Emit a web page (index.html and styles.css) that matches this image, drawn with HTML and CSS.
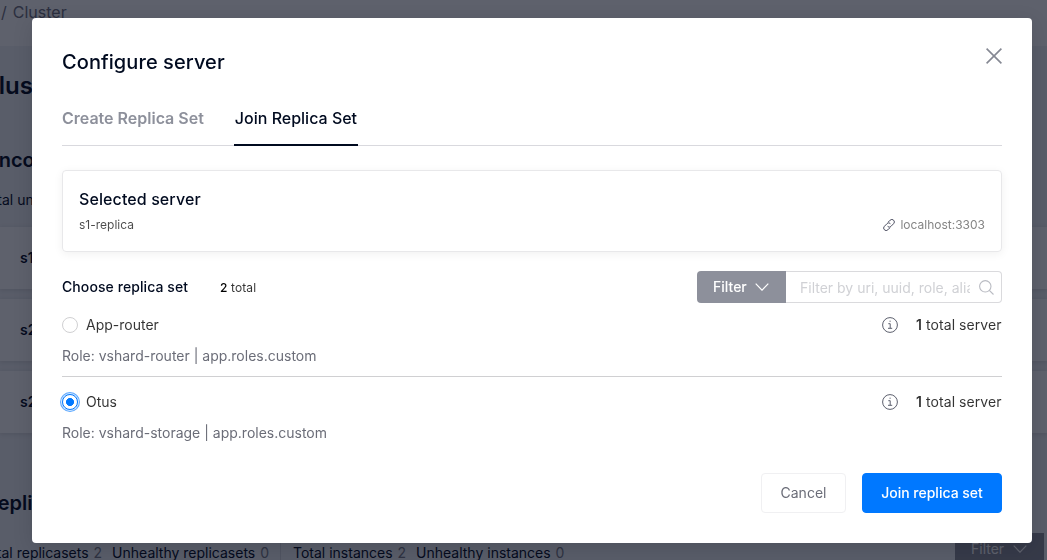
FILE: index.html
```html
<!DOCTYPE html>
<html lang="en">
<head>
<meta charset="utf-8">
<title>Cluster</title>
<link rel="stylesheet" href="styles.css">
</head>
<body>
<div class="page">
  <header class="crumbs"><span>/</span><span>Cluster</span></header>
  <main class="content">
    <h1 class="page-title">Cluster</h1>
    <h2 class="section-title">Unco</h2>
    <p class="section-note">Total un</p>
    <div class="cards">
      <div class="card">s1</div>
      <div class="card">s2</div>
      <div class="card">s2</div>
    </div>
    <h2 class="section-title replicas-title">Replica sets</h2>
    <div class="stats">
      <span class="stat first">Total replicasets <i>2</i></span>
      <span class="stat">Unhealthy replicasets <i>0</i></span>
      <span class="stat divided">Total instances <i>2</i></span>
      <span class="stat">Unhealthy instances <i>0</i></span>
      <div class="page-filter">Filter <svg width="14" height="8" viewBox="0 0 14 8"><path d="M.7.7 7 7.2 13.3.7"/></svg></div>
    </div>
  </main>
</div>
<div class="overlay">
  <section class="modal">
    <div class="modal-head">
      <h2 class="modal-title">Configure server</h2>
      <svg class="close" width="16" height="16" viewBox="0 0 16 16"><path d="M.6.6 15.4 15.4M15.4.6.6 15.4"/></svg>
    </div>
    <nav class="tabs"><span class="tab">Create Replica Set</span><span class="tab active">Join Replica Set</span></nav>
    <div class="selected">
      <h3 class="selected-title">Selected server</h3>
      <div class="selected-row">
        <span>s1-replica</span>
        <span class="uri"><svg width="12" height="12" viewBox="0 0 12 12"><path d="M5 3.3 7.1 1.2a2.25 2.25 0 0 1 3.5 3.5L7.8 7.5A2.2 2.2 0 0 1 4.6 7.3M7 8.7 4.9 10.8A2.25 2.25 0 0 1 1.4 7.3L4.2 4.5A2.2 2.2 0 0 1 7.4 4.7"/></svg>localhost:3303</span>
      </div>
    </div>
    <div class="choose">
      <h3 class="choose-title">Choose replica set</h3>
      <span class="choose-total"><b>2</b> total</span>
      <div class="filter">
        <span class="filter-button">Filter <svg width="14" height="8" viewBox="0 0 14 8"><path d="M.7.7 7 7.2 13.3.7"/></svg></span>
        <label class="filter-field">
          <span class="placeholder">Filter by uri, uuid, role, alias or labels</span>
          <svg width="15" height="15" viewBox="0 0 15 15"><circle cx="6.3" cy="6.3" r="5.7"/><path d="m10.3 10.3 4.2 4.2"/></svg>
        </label>
      </div>
    </div>
    <div class="option">
      <div class="option-row">
        <span class="radio"></span><span>App-router</span>
        <svg class="info" width="16" height="16" viewBox="0 0 16 16"><circle cx="8" cy="8" r="7.4"/><path d="M6.3 6.7h1.9v4.6M6 11.3h4.2M7.5 4.2h1.2"/></svg>
        <span class="servers"><b>1</b> total server</span>
      </div>
      <p class="role">Role: vshard-router | app.roles.custom</p>
    </div>
    <div class="option">
      <div class="option-row">
        <span class="radio checked"></span><span>Otus</span>
        <svg class="info" width="16" height="16" viewBox="0 0 16 16"><circle cx="8" cy="8" r="7.4"/><path d="M6.3 6.7h1.9v4.6M6 11.3h4.2M7.5 4.2h1.2"/></svg>
        <span class="servers"><b>1</b> total server</span>
      </div>
      <p class="role">Role: vshard-storage | app.roles.custom</p>
    </div>
    <div class="actions"><button class="button">Cancel</button><button class="button primary">Join replica set</button></div>
  </section>
</div>
</body>
</html>
```
FILE: styles.css
```css
* { box-sizing: border-box; }
body { margin: 0; height: 560px; overflow: hidden; font-family: Inter, "Open Sans", sans-serif; font-size: 14px; line-height: 22px; color: rgba(0, 0, 0, .8); }
h1, h2, h3, p { margin: 0; }
svg { fill: none; flex: none; display: block; }
.page { height: 560px; overflow: hidden; white-space: nowrap; }
.crumbs { height: 46px; padding: 0 0 0 1px; display: flex; gap: 6px; font-size: 16px; line-height: 24px; color: #6f7180; background: #fff; }
.content { height: 514px; padding-top: 24px; background: #f0f2f5; color: #000a1f; }
.page-title { margin-left: -19px; font-size: 24px; line-height: 32px; font-weight: 600; }
.section-title { margin: 46px 0 0 -16px; font-size: 20px; line-height: 24px; font-weight: 600; }
.section-note { margin: 17px 0 0 -19px; line-height: 22px; }
.cards { display: grid; gap: 10px; padding-top: 16px; }
.card { height: 62px; padding: 20px; background: #fff; font-weight: 600; box-shadow: 0 1px 5px rgba(0, 0, 0, .12); }
.replicas-title { margin: 58px 0 0 -15px; }
.stats { display: flex; align-items: center; margin-top: 17px; height: 42px; }
.stat { margin-right: 10px; }
.stat i { font-style: normal; color: #777b87; margin-left: 1px; }
.first { margin-left: -19.5px; }
.divided { border-left: 1px solid #d5d8df; padding-left: 12px; margin-left: 1px; }
.page-filter { display: flex; gap: 9px; align-items: center; width: 89px; height: 32px; margin: -8px 3px 0 auto; padding-left: 16px; background: #8d909b; color: #fff; }
.page-filter svg, .filter-button svg { stroke: #fff; stroke-width: 1.2; }
.overlay { position: fixed; inset: 0; padding: 18px 15px 17px 32px; background: rgba(8, 12, 29, .65); }
.modal { height: 525px; padding: 30px; border-radius: 4px; background: #fff; box-shadow: 0 5px 20px rgba(0, 0, 0, .13); }
.modal-head { display: flex; justify-content: space-between; height: 28px; }
.modal-title { font-size: 20px; line-height: 28px; font-weight: 500; letter-spacing: .08px; color: #000a1f; }
.close { stroke: #858893; stroke-width: 1.6; }
.tabs { display: flex; gap: 30px; height: 52px; margin-top: 18px; border-bottom: 1px solid #d9d9de; align-items: stretch; font-size: 16px; line-height: 48px; color: #8d909b; font-weight: 600; }
.tab.active { height: 52px; padding: 0 1px; border-bottom: 2px solid #000a1f; color: #000a1f; font-weight: 500; }
.selected { margin-top: 24px; height: 82px; padding: 16px; border: 1px solid #e8e8ea; border-radius: 4px; box-shadow: 0 2px 10px rgba(0, 0, 0, .06); }
.selected-title { font-size: 16px; line-height: 24px; font-weight: 500; letter-spacing: .1px; color: #000a1f; }
.selected-row { display: flex; justify-content: space-between; margin-top: 4px; font-size: 12px; line-height: 20px; color: rgba(0, 0, 0, .7); }
.uri { display: flex; align-items: center; gap: 5px; color: #858585; }
.uri svg { stroke: #4b4e60; }
.choose { display: flex; align-items: center; height: 32px; margin-top: 19px; }
.choose-title { font-size: 14px; font-weight: 500; letter-spacing: .08px; color: #000a1f; }
.choose-total { margin: 2px 0 0 32px; font-size: 12px; letter-spacing: .1px; }
.choose-total b { font-weight: 500; color: #000; }
.filter { display: flex; width: 305px; height: 32px; margin-left: auto; }
.filter-button { display: flex; align-items: center; gap: 8px; width: 89px; padding-left: 16px; border-radius: 4px 0 0 4px; background: #8d909b; color: #fff; font-weight: 500; }
.filter-field { display: flex; align-items: center; gap: 9px; flex: 1; padding: 0 7px 0 14px; border: 1px solid #dadadd; border-left: 0; border-radius: 0 4px 4px 0; }
.placeholder { width: 170px; padding-top: 2px; overflow: hidden; white-space: nowrap; color: #d0d1d5; }
.filter-field svg { stroke: #b9bbc2; stroke-width: 1.1; }
.option { height: 77px; padding-top: 14px; }
.choose + .option { height: 74px; padding-top: 11px; border-bottom: 1px solid #d0d0d2; }
.option-row { display: flex; align-items: center; height: 22px; }
.radio { width: 16px; height: 16px; margin-right: 8px; border: 1px solid #d0d0d2; border-radius: 50%; }
.radio.checked { border-color: #0078ff; background: radial-gradient(circle, #0078ff 0 3.7px, #fff 4.3px); box-shadow: 0 0 0 1px #d5e9ff, 0 0 0 2px #5ca8ff; }
.info { margin-left: auto; stroke: #5c5f6d; stroke-width: 1; }
.servers { width: 86px; margin-left: 18px; letter-spacing: .07px; white-space: nowrap; }
.servers b { font-weight: 600; }
.role { margin-top: 9px; color: #6b6d78; }
.actions { display: flex; justify-content: flex-end; gap: 16px; margin-top: 19px; }
.button { width: 85px; height: 40px; padding: 0; border: 1px solid #f0f0f2; border-radius: 4px; background: #fff; color: #6b6d78; font: 14px/22px Inter, sans-serif; }
.primary { width: 140px; border-color: #0078ff; background: #0078ff; color: #fff; font-weight: 500; }
```
